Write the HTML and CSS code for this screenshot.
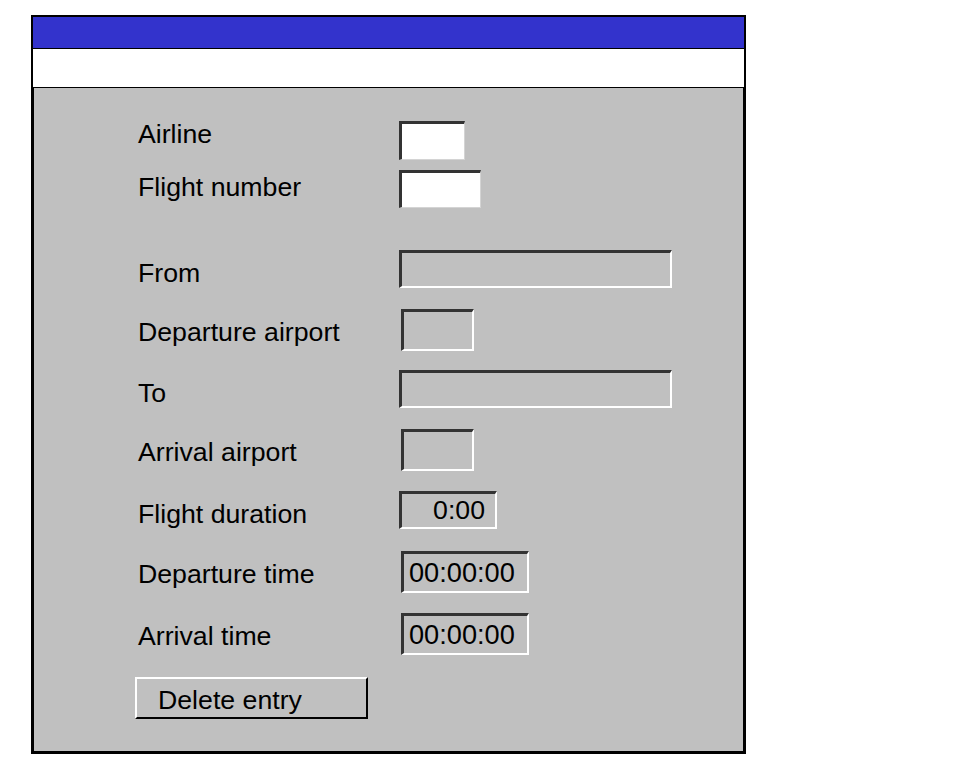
FILE: index.html
```html
<!DOCTYPE html>
<html lang="en">
<head>
<meta charset="utf-8">
<title>Flight entry</title>
<link rel="stylesheet" href="styles.css">
</head>
<body>
<div class="window">
  <div class="titlebar"></div>
  <div class="menubar"></div>
  <div class="body">
    <div class="form">
      <div class="label label-up">Airline</div>
      <div class="field field-white w-airline h39"></div>

      <div class="label label-mid">Flight number</div>
      <div class="field field-white w-flight"></div>

      <div class="label">From</div>
      <div class="field w-place"></div>

      <div class="label">Departure airport</div>
      <div class="field w-code h42 shift"></div>

      <div class="label">To</div>
      <div class="field w-place"></div>

      <div class="label">Arrival airport</div>
      <div class="field w-code h42 shift"></div>

      <div class="label">Flight duration</div>
      <div class="field w-duration value-right">0:00</div>

      <div class="label">Departure time</div>
      <div class="field w-time h42 shift value-left">00:00:00</div>

      <div class="label">Arrival time</div>
      <div class="field w-time h42 shift value-left">00:00:00</div>

      <button class="button" type="button">Delete entry</button>
    </div>
  </div>
</div>
</body>
</html>
```

FILE: styles.css
```css
html, body {
  margin: 0;
  padding: 0;
  background: #ffffff;
}

body {
  font-family: "Liberation Sans", Arial, sans-serif;
  color: #000000;
}

.window {
  box-sizing: border-box;
  width: 715px;
  height: 739px;
  margin: 15px 0 0 31px;
  border: 2px solid #000000;
  display: flex;
  flex-direction: column;
}

.titlebar {
  height: 31px;
  background: #3333cc;
  border-bottom: 1px solid #000000;
}

.menubar {
  height: 38px;
  background: #ffffff;
  border-bottom: 1px solid #000000;
}

.body {
  flex: 1;
  background: #c0c0c0;
  border: 1px solid #000000;
  border-top: none;
  padding: 33px 0 0 104px;
}

.form {
  display: grid;
  grid-template-columns: 261px 1fr;
  grid-template-rows: 49px 80px 59px 61px 59px 62px 60px 62px 64px auto;
  align-items: start;
}

.label {
  font-size: 26.7px;
  line-height: 30px;
  margin-top: 8px;
  white-space: nowrap;
}

.label-up {
  margin-top: -2px;
}

.label-mid {
  margin-top: 2px;
}

.field {
  box-sizing: border-box;
  height: 38px;
  border-top: 3px solid #333333;
  border-left: 3px solid #333333;
  border-right: 2px solid #ffffff;
  border-bottom: 2px solid #ffffff;
  background: #c0c0c0;
  font-size: 26.7px;
  white-space: nowrap;
}

.field-white {
  background: #ffffff;
  border-right: 1px solid #d4d4d4;
  border-bottom: 1px solid #d4d4d4;
}

.h39 { height: 39px; }
.h42 { height: 42px; }
.shift { margin-left: 2px; }

.w-airline { width: 66px; }
.w-flight { width: 82px; }
.w-place { width: 273px; }
.w-code { width: 73px; }
.w-duration { width: 98px; }
.w-time { width: 128px; }

.value-right {
  text-align: right;
  line-height: 33px;
  padding-right: 10px;
}

.value-left {
  line-height: 34px;
  padding: 2px 0 0 5px;
  font-size: 27.2px;
}

.button {
  grid-column: 1 / span 2;
  box-sizing: border-box;
  width: 233px;
  height: 42px;
  margin: 0 0 0 -3px;
  padding: 4px 0 0 21px;
  text-align: left;
  font-family: "Liberation Sans", Arial, sans-serif;
  font-size: 26.7px;
  line-height: 34px;
  color: #000000;
  background: #c0c0c0;
  border-top: 2px solid #ffffff;
  border-left: 2px solid #ffffff;
  border-right: 2px solid #000000;
  border-bottom: 2px solid #000000;
  border-radius: 0;
  cursor: pointer;
}
```
